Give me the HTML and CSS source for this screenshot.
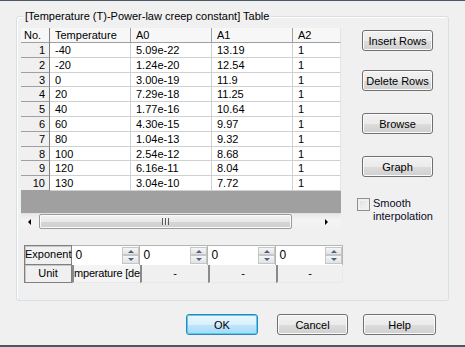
FILE: index.html
```html
<!DOCTYPE html>
<html lang="en">

<head>
    <meta charset="UTF-8">
    <title>Power-law creep constant</title>
    <link rel="stylesheet" href="styles.css">
</head>

<body>
    <div class="dialog">
        <!-- 分组框 -->
        <div class="group">
            <div class="group-title">[Temperature (T)-Power-law creep constant] Table</div>
            <div class="group-body">
                <div class="left">
                    <!-- 表格 -->
                    <div class="sheet">
                        <div class="row head">
                            <div class="c n">No.</div>
                            <div class="c">Temperature</div>
                            <div class="c">A0</div>
                            <div class="c">A1</div>
                            <div class="c last">A2</div>
                        </div>
                        <div class="row"><div class="c n">1</div><div class="c">-40</div><div class="c">5.09e-22</div><div class="c">13.19</div><div class="c last">1</div></div>
                        <div class="row"><div class="c n">2</div><div class="c">-20</div><div class="c">1.24e-20</div><div class="c">12.54</div><div class="c last">1</div></div>
                        <div class="row"><div class="c n">3</div><div class="c">0</div><div class="c">3.00e-19</div><div class="c">11.9</div><div class="c last">1</div></div>
                        <div class="row"><div class="c n">4</div><div class="c">20</div><div class="c">7.29e-18</div><div class="c">11.25</div><div class="c last">1</div></div>
                        <div class="row"><div class="c n">5</div><div class="c">40</div><div class="c">1.77e-16</div><div class="c">10.64</div><div class="c last">1</div></div>
                        <div class="row"><div class="c n">6</div><div class="c">60</div><div class="c">4.30e-15</div><div class="c">9.97</div><div class="c last">1</div></div>
                        <div class="row"><div class="c n">7</div><div class="c">80</div><div class="c">1.04e-13</div><div class="c">9.32</div><div class="c last">1</div></div>
                        <div class="row"><div class="c n">8</div><div class="c">100</div><div class="c">2.54e-12</div><div class="c">8.68</div><div class="c last">1</div></div>
                        <div class="row"><div class="c n">9</div><div class="c">120</div><div class="c">6.16e-11</div><div class="c">8.04</div><div class="c last">1</div></div>
                        <div class="row"><div class="c n">10</div><div class="c">130</div><div class="c">3.04e-10</div><div class="c">7.72</div><div class="c last">1</div></div>
                        <div class="sheet-empty"></div>
                        <!-- 横向滚动条 -->
                        <div class="hscroll">
                            <span class="sarrow sleft"></span>
                            <div class="thumb"><span class="grip"></span></div>
                            <span class="sarrow sright"></span>
                        </div>
                    </div>

                    <!-- 指数 / 单位 -->
                    <div class="params">
                        <div class="prow">
                            <div class="plabel">Exponent</div>
                            <div class="spin"><span class="val">0</span><span class="spin-btns"><i class="up"></i><i class="down"></i></span></div>
                            <div class="spin"><span class="val">0</span><span class="spin-btns"><i class="up"></i><i class="down"></i></span></div>
                            <div class="spin"><span class="val">0</span><span class="spin-btns"><i class="up"></i><i class="down"></i></span></div>
                            <div class="spin"><span class="val">0</span><span class="spin-btns"><i class="up"></i><i class="down"></i></span></div>
                        </div>
                        <div class="prow unit">
                            <div class="plabel">Unit</div>
                            <div class="ucell clip">mperature [de</div>
                            <div class="ucell">-</div>
                            <div class="ucell">-</div>
                            <div class="ucell">-</div>
                        </div>
                    </div>
                </div>

                <!-- 右侧按钮 -->
                <div class="right">
                    <button class="btn">Insert Rows</button>
                    <button class="btn gap">Delete Rows</button>
                    <button class="btn gap">Browse</button>
                    <button class="btn last">Graph</button>
                    <label class="check">
                        <span class="box"></span>
                        <span class="check-text">Smooth<br>interpolation</span>
                    </label>
                </div>
            </div>
        </div>

        <!-- 底部按钮 -->
        <div class="footer">
            <button class="btn default">OK</button>
            <button class="btn cancel">Cancel</button>
            <button class="btn help">Help</button>
        </div>
    </div>
</body>

</html>
```

FILE: styles.css
```css
* {
    margin: 0;
    padding: 0;
    box-sizing: border-box;
}

body {
    background: #f0f0f0;
    font-family: "Liberation Sans", Arial, sans-serif;
    font-size: 11px;
    color: #000;
}

.dialog {
    width: 465px;
    height: 347px;
    background: #f0f0f0;
    border-top: 1px solid #4a5866;
    border-bottom: 2px solid #4a5866;
    padding: 15px 0 0 16px;
}

/* 分组框 */
.group {
    position: relative;
    width: 433px;
    height: 285px;
    border: 1px solid #d5dfe5;
    border-radius: 3px;
    box-shadow: inset 1px 1px 0 #fff;
}

.group-title {
    position: absolute;
    top: -8px;
    left: 6px;
    padding: 0 2px;
    background: #f0f0f0;
    color: #000;
    line-height: 14px;
}

.group-body {
    display: flex;
    padding: 11px 0 0 4px;
}

.left {
    width: 320px;
}

/* 表格 */
.sheet {
    width: 320px;
    background: #a0a0a0;
}

.row {
    display: flex;
    height: 14.8px;
    background: #fff;
}

.row.head {
    height: 15px;
    background: #f7f7f7;
}

.c {
    flex: 0 0 81px;
    border-right: 1px solid #d0d0d0;
    border-bottom: 1px solid #d0d0d0;
    padding-left: 5px;
    line-height: 14px;
    white-space: nowrap;
    overflow: hidden;
}

.c.n {
    flex-basis: 29px;
    background: #f0f0f0;
    border-right: 1px solid #808080;
    border-bottom: 1px solid #a0a0a0;
    text-align: right;
    padding: 0 4px 0 0;
}

.c.last {
    flex-basis: 48px;
    border-right: 1px solid #e4e4e4;
}

.head .c {
    border-bottom: 1px solid #a0a0a0;
    border-right: 1px solid #a0a0a0;
}

.head .c.n {
    text-align: left;
    padding-left: 3px;
    background: #f7f7f7;
    border-right: 1px solid #808080;
}

.head .c.last {
    border-right: 1px solid #e4e4e4;
}

.sheet-empty {
    height: 22px;
}

/* 滚动条 */
.hscroll {
    display: flex;
    align-items: center;
    height: 17px;
    background: linear-gradient(#e8e8e8, #f4f4f4 40%, #f0f0f0);
    border-top: 1px solid #e2e2e2;
}

.sarrow {
    flex: 0 0 18px;
    height: 100%;
    display: flex;
    align-items: center;
    justify-content: center;
}

.sarrow::before {
    content: "";
    border: 3px solid transparent;
}

.sleft::before {
    border-right: 3px solid #000;
    margin-left: -4px;
}

.sright::before {
    border-left: 3px solid #000;
    margin-left: 4px;
}

.thumb {
    width: 253px;
    height: 15px;
    border: 1px solid #9a9a9a;
    border-radius: 2px;
    background: linear-gradient(#f4f4f4, #e8e8e8 50%, #d6d6d6 51%, #cfcfcf);
    box-shadow: inset 0 0 0 1px #fbfbfb;
    display: flex;
    align-items: center;
    justify-content: center;
}

.grip {
    width: 7px;
    height: 7px;
    background: repeating-linear-gradient(90deg, #5a5a5a 0 1px, #eee 1px 2px, transparent 2px 3px);
}

.hscroll .sright {
    margin-left: auto;
    flex-basis: 30px;
}

/* 指数 / 单位 */
.params {
    margin: 15px 0 0 3px;
    width: 319px;
}

.prow {
    display: flex;
    height: 20px;
}

.prow.unit {
    height: 18px;
}

.plabel {
    flex: 0 0 48px;
    border: 1px solid #808080;
    box-shadow: inset 1px 1px 0 #c8c8c8;
    text-align: center;
    line-height: 17px;
    background: #f0f0f0;
}

.prow.unit .plabel {
    border-top: 0;
}

.spin {
    flex: 0 0 68px;
    display: flex;
    background: #fff;
    border-top: 1px solid #b4b4b4;
    border-right: 1px solid #b4b4b4;
}

.spin:last-child {
    flex-basis: 67px;
}

.val {
    flex: 1;
    padding-left: 3px;
    line-height: 18px;
    font-size: 12px;
}

.spin-btns {
    display: flex;
    flex-direction: column;
    width: 17px;
    padding: 1px 0;
}

.spin-btns i {
    flex: 1;
    display: flex;
    align-items: center;
    justify-content: center;
    border: 1px solid #c6c6c6;
    background: linear-gradient(#f6f6f6, #e2e2e2);
}

.spin-btns i::before {
    content: "";
    border: 3px solid transparent;
}

.spin-btns .up::before {
    border-bottom: 3px solid #4d6185;
    border-top: 0;
}

.spin-btns .down::before {
    border-top: 3px solid #4d6185;
    border-bottom: 0;
}

.ucell {
    flex: 0 0 68px;
    border-left: 2px solid #8a8a8a;
    border-bottom: 1px solid #e8e8e8;
    background: #f0f0f0;
    text-align: center;
    line-height: 17px;
    white-space: nowrap;
    overflow: hidden;
}

.ucell:last-child {
    flex-basis: 67px;
    border-right: 1px solid #e8e8e8;
}

.ucell.clip {
    text-align: left;
    letter-spacing: -0.2px;
    background: #f4f4f4;
}

/* 按钮 */
.btn {
    display: block;
    width: 72px;
    height: 21px;
    border: 1px solid #707070;
    border-radius: 3px;
    background: linear-gradient(#f2f2f2, #ebebeb 50%, #dddddd 51%, #cfcfcf);
    box-shadow: inset 0 0 0 1px #fbfbfb;
    font-family: "Liberation Sans", Arial, sans-serif;
    font-size: 11px;
    color: #000;
}

.right {
    margin-left: 21px;
    padding-top: 2px;
}

.right .btn {
    width: 71px;
    margin-bottom: 19px;
}

.right .btn.gap {
    margin-bottom: 22px;
}

.right .btn.last {
    margin-bottom: 22px;
}

.check {
    display: flex;
    align-items: flex-start;
    margin: -2px 0 0 -5px;
}

.box {
    flex: 0 0 13px;
    height: 13px;
    margin-top: 1px;
    border: 1px solid #8e8f8f;
    background: linear-gradient(135deg, #dcdcdc, #f8f8f8);
    box-shadow: inset 0 0 0 2px #f0f0f0;
}

.check-text {
    margin-left: 3px;
    line-height: 13px;
    color: #0a0a28;
}

.footer {
    display: flex;
    padding: 13px 0 0 170px;
}

.btn.default {
    border-color: #3c7fb1;
    background: linear-gradient(#eaf6fd, #d9f0fc 50%, #bee6fd 51%, #a7d9f5);
    box-shadow: inset 0 0 0 1px #48d2f4;
}

.btn.cancel {
    width: 71px;
    margin-left: 19px;
}

.btn.help {
    width: 73px;
    margin-left: 15px;
}
```
